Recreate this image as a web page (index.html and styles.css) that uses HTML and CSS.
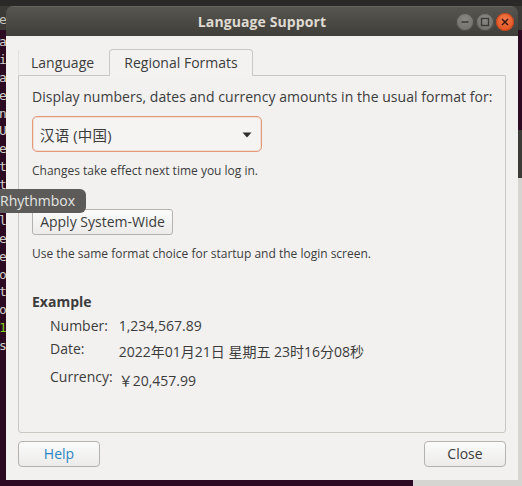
FILE: index.html
```html
<!DOCTYPE html>
<html lang="en">
<head>
<meta charset="utf-8">
<title>Language Support</title>
<link rel="stylesheet" href="styles.css">
</head>
<body>
<div class="desk">
  <div class="panel-strip"></div>
  <div class="term-head"></div>
  <div class="term">
    <div class="tl head-l">e</div>
    <div class="tl">a</div>
    <div class="tl">i</div>
    <div class="tl">a</div>
    <div class="tl">e</div>
    <div class="tl">n</div>
    <div class="tl">U</div>
    <div class="tl">e</div>
    <div class="tl">t</div>
    <div class="tl">t</div>
    <div class="tl"></div>
    <div class="tl">l</div>
    <div class="tl">e</div>
    <div class="tl">e</div>
    <div class="tl">o</div>
    <div class="tl">t</div>
    <div class="tl">o</div>
    <div class="tl green">1</div>
    <div class="tl">s</div>
  </div>
  <div class="back-win">
    <div class="back-head"></div>
    <div class="back-body"></div>
  </div>

  <div class="win">
    <div class="titlebar">
      <div></div>
      <div class="title">Language Support</div>
      <div class="wm">
        <span class="wmb min"><svg width="18" height="18" viewBox="0 0 18 18"><path d="M5.5 9h7" stroke="#3a3935" stroke-width="1.6"/></svg></span>
        <span class="wmb max"><svg width="18" height="18" viewBox="0 0 18 18"><rect x="5.5" y="5.5" width="7" height="7" fill="none" stroke="#3a3935" stroke-width="1.3"/></svg></span>
        <span class="wmb close"><svg width="18" height="18" viewBox="0 0 18 18"><path d="M6 6l6 6M12 6l-6 6" stroke="#3a1a0e" stroke-width="1.5"/></svg></span>
      </div>
    </div>
    <div class="content">
      <div class="tabs">
        <div class="tab first">Language</div>
        <div class="tab active">Regional Formats</div>
      </div>
      <div class="page">
        <div class="lead">Display numbers, dates and currency amounts in the usual format for:</div>
        <div class="combo">
          <span class="combo-text">汉语 (中国)</span>
          <svg class="arrow" width="10" height="6" viewBox="0 0 10 6"><path d="M0.5 0.5h9L5 5.5z" fill="#2e2e2e"/></svg>
        </div>
        <div class="note n1">Changes take effect next time you log in.</div>
        <button class="btn apply">Apply System-Wide</button>
        <div class="note n2">Use the same format choice for startup and the login screen.</div>
        <div class="ex-title">Example</div>
        <div class="ex-grid">
          <div class="lbl">Number:</div><div class="val">1,234,567.89</div>
          <div class="lbl">Date:</div><div class="val tall">2022年01月21日 星期五 23时16分08秒</div>
          <div class="lbl">Currency:</div><div class="val tall2">￥20,457.99</div>
        </div>
      </div>
      <div class="actions">
        <button class="btn wide help">Help</button>
        <button class="btn wide">Close</button>
      </div>
    </div>
  </div>

  <div class="tooltip">Rhythmbox</div>
</div>
</body>
</html>
```

FILE: styles.css
```css
* { box-sizing: border-box; }
html, body {
  margin: 0;
  padding: 0;
}
body {
  width: 522px;
  height: 486px;
  overflow: hidden;
  background: #2c0a22;
  font-family: "Open Sans", "Noto Sans CJK SC", sans-serif;
}
.desk {
  position: relative;
  width: 522px;
  height: 486px;
  overflow: hidden;
}
.panel-strip {
  position: absolute;
  left: 0; top: 0;
  width: 522px; height: 6px;
  background: #2a2927;
}
.term-head {
  position: absolute;
  left: 0; top: 6px;
  width: 522px; height: 24px;
  background: #3b3a37;
}
.term {
  position: absolute;
  left: -1px; top: 11px;
  font-family: "DejaVu Sans Mono", monospace;
  font-size: 13px;
  color: #d0d0cc;
}
.tl {
  height: 17.9px;
  line-height: 17px;
}
.tl.head-l {
  height: 22px;
  color: #c8c6c0;
}
.tl.green { color: #7fc81c; }

.back-win {
  position: absolute;
  left: 413px; top: 130px;
  width: 200px; height: 400px;
}
.back-head { height: 48px; background: #3c3b37; }
.back-body { height: 352px; background: #d7d5d1; }

.win {
  position: absolute;
  left: 6px; top: 6px;
  width: 512px; height: 474px;
  display: flex;
  flex-direction: column;
  border-radius: 7px 7px 0 0;
  overflow: hidden;
}
.titlebar {
  height: 30px;
  flex: none;
  display: grid;
  grid-template-columns: 1fr auto 1fr;
  align-items: center;
  background: linear-gradient(#57554f, #403e39);
  border-top: 1px solid #66645e;
}
.title {
  color: #dfdbd2;
  font-weight: 700;
  font-size: 14px;
  letter-spacing: 0.1px;
}
.wm {
  justify-self: end;
  display: flex;
  gap: 2px;
  padding-right: 4px;
  padding-top: 1px;
}
.wmb {
  width: 18px; height: 18px;
  border-radius: 50%;
  display: block;
  background: radial-gradient(circle at 50% 35%, #8a8882, #6b6964);
  box-shadow: inset 0 0 0 1px #4a4944;
}
.wmb svg { display: block; }
.wmb.close {
  background: radial-gradient(circle at 50% 35%, #f2774a, #df4a16);
  box-shadow: inset 0 0 0 1px #b8461e;
}

.content {
  flex: 1;
  background: #f2f1f0;
  padding: 13px 12px 13px;
  display: flex;
  flex-direction: column;
  color: #3c3c3c;
}
.tabs {
  display: flex;
  height: 26px;
  flex: none;
  position: relative;
  z-index: 1;
}
.tab {
  height: 26px;
  padding: 0 12px;
  font-size: 14px;
  line-height: 25px;
  border: 1px solid transparent;
  border-bottom: none;
  border-left-color: #e3e1de;
  border-radius: 4px 4px 0 0;
  color: #3c3c3c;
  text-align: center;
}
.tab.first { width: 91px; text-align: left; }
.tab.active {
  width: 144px;
  height: 27px;
  background: #f3f2f1;
  border-color: #cbc8c4;
}
.page {
  flex: 1;
  border: 1px solid #cbc8c4;
  border-radius: 0 0 3px 3px;
  padding: 12px 12px 0 12px;
  display: flex;
  flex-direction: column;
  align-items: flex-start;
}
.lead {
  font-size: 14px;
  line-height: 18px;
  margin-left: 1px;
  letter-spacing: 0.04px;
}
.combo {
  margin-top: 10px;
  margin-left: 1px;
  width: 230px;
  height: 36px;
  border: 1px solid #e39a7b;
  border-radius: 5px;
  background: #f5f4f3;
  box-shadow: inset 0 0 0 1px rgba(233, 150, 115, 0.25);
  display: flex;
  align-items: center;
  justify-content: space-between;
  padding: 0 9px 0 7px;
}
.combo-text {
  font-size: 14.5px;
  color: #3c3c3c;
  letter-spacing: 0.2px;
}
.arrow { display: block; margin-top: 1px; }
.note {
  font-size: 12px;
  line-height: 16px;
  margin-left: 1px;
}
.n1 { margin-top: 11px; }
.btn {
  font-family: "Open Sans", "Noto Sans CJK SC", sans-serif;
  font-size: 14px;
  color: #3c3c3c;
  height: 26px;
  border: 1px solid #b4b2ae;
  border-radius: 4px;
  background: linear-gradient(#fbfbfb, #ecebea);
  padding: 0 6px;
  line-height: 22px;
  margin: 0;
}
.apply {
  margin-top: 30px;
  margin-left: 1px;
  width: 141px;
  border-radius: 3px;
}
.n2 { margin-top: 11px; }
.ex-title {
  margin-top: 31px;
  font-weight: 700;
  font-size: 14px;
  line-height: 18px;
  margin-left: 1px;
}
.ex-grid {
  margin-top: 5px;
  margin-left: 19px;
  display: grid;
  grid-template-columns: auto auto;
  column-gap: 6px;
  row-gap: 4px;
  align-items: start;
  font-size: 14px;
}
.lbl { line-height: 19px; }
.val { line-height: 19px; }
.val.tall { line-height: 26px; }
.val.tall2 { line-height: 24px; }
.lbl:nth-last-child(2) { margin-top: -2px; }

.actions {
  margin-top: 8px;
  display: flex;
  justify-content: space-between;
  flex: none;
}
.btn.wide {
  width: 82px;
}
.btn.help { color: #2a86c2; }

.tooltip {
  position: absolute;
  left: -6px; top: 189px;
  width: 92px; height: 24px;
  padding-left: 6px;
  background: #5c5b59;
  color: #e6e6e4;
  font-size: 14px;
  line-height: 23px;
  border-radius: 6px;
}
```
